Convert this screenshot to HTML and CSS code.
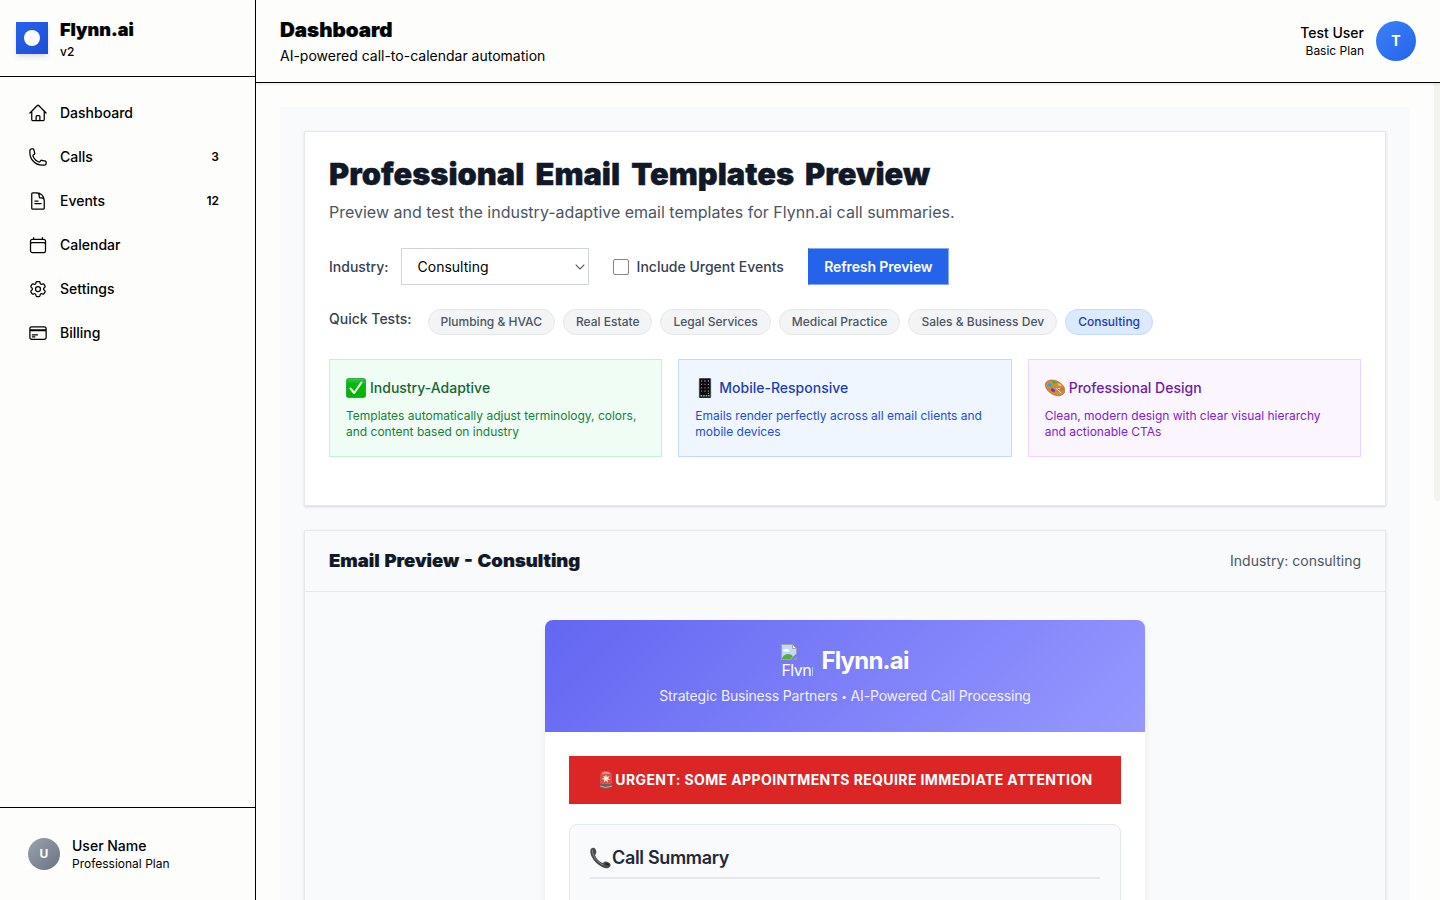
FILE: index.html
```html
<!DOCTYPE html>
<html lang="en">
<head>
<meta charset="utf-8">
<title>Flynn.ai Dashboard</title>
<link rel="stylesheet" href="styles.css">
</head>
<body>
<div class="app">
  <aside class="sidebar">
    <div class="brand">
      <div class="brand-mark"><span class="brand-dot"></span></div>
      <div>
        <div class="display brand-name">Flynn.ai</div>
        <div class="brand-version">v2</div>
      </div>
    </div>
    <nav class="nav">
      <a class="nav-item"><svg class="icon" viewBox="0 0 24 24"><path d="m2.25 12 8.954-8.955c.44-.439 1.152-.439 1.591 0L21.75 12M4.5 9.75v10.125c0 .621.504 1.125 1.125 1.125H9.75v-4.875c0-.621.504-1.125 1.125-1.125h2.25c.621 0 1.125.504 1.125 1.125V21h4.125c.621 0 1.125-.504 1.125-1.125V9.75M8.25 21h8.25"/></svg><span>Dashboard</span></a>
      <a class="nav-item"><svg class="icon" viewBox="0 0 24 24"><path d="M2.25 6.75c0 8.284 6.716 15 15 15h2.25a2.25 2.25 0 0 0 2.25-2.25v-1.372c0-.516-.351-.966-.852-1.091l-4.423-1.106c-.44-.11-.902.055-1.173.417l-.97 1.293c-.282.376-.769.542-1.21.38a12.035 12.035 0 0 1-7.143-7.143c-.162-.441.004-.928.38-1.21l1.293-.97c.363-.271.527-.734.417-1.173L6.963 3.102a1.125 1.125 0 0 0-1.091-.852H4.5A2.25 2.25 0 0 0 2.25 4.5v2.25Z"/></svg><span>Calls</span><span class="nav-count">3</span></a>
      <a class="nav-item"><svg class="icon" viewBox="0 0 24 24"><path d="M10.5 2.25H5.625c-.621 0-1.125.504-1.125 1.125v17.25c0 .621.504 1.125 1.125 1.125h12.75c.621 0 1.125-.504 1.125-1.125V11.25a9 9 0 0 0-9-9ZM10.125 2.25A3.375 3.375 0 0 1 13.5 5.625v1.5c0 .621.504 1.125 1.125 1.125h1.5a3.375 3.375 0 0 1 3.375 3.375M8.25 12H12m-3.75 3h7.5"/></svg><span>Events</span><span class="nav-count">12</span></a>
      <a class="nav-item"><svg class="icon" viewBox="0 0 24 24"><path d="M6.75 3v2.25M17.25 3v2.25M3 18.75V7.5a2.25 2.25 0 0 1 2.25-2.25h13.5A2.25 2.25 0 0 1 21 7.5v11.25m-18 0A2.25 2.25 0 0 0 5.25 21h13.5A2.25 2.25 0 0 0 21 18.75m-18 0V11.25A2.25 2.25 0 0 1 5.25 9h13.5A2.25 2.25 0 0 1 21 11.25v7.5"/></svg><span>Calendar</span></a>
      <a class="nav-item"><svg class="icon" viewBox="0 0 24 24"><path d="M9.594 3.94c.09-.542.56-.94 1.11-.94h2.593c.55 0 1.02.398 1.11.94l.213 1.281c.063.374.313.686.645.87.074.04.147.083.22.127.325.196.72.257 1.075.124l1.217-.456a1.125 1.125 0 0 1 1.37.49l1.296 2.247a1.125 1.125 0 0 1-.26 1.431l-1.003.827c-.293.241-.438.613-.43.992a7.723 7.723 0 0 1 0 .255c-.008.378.137.75.43.991l1.004.827c.424.35.534.955.26 1.43l-1.298 2.247a1.125 1.125 0 0 1-1.369.491l-1.217-.456c-.355-.133-.75-.072-1.076.124a6.47 6.47 0 0 1-.22.128c-.331.183-.581.495-.644.869l-.213 1.281c-.09.543-.56.94-1.11.94h-2.594c-.55 0-1.019-.398-1.11-.94l-.213-1.281c-.062-.374-.312-.686-.644-.87a6.52 6.52 0 0 1-.22-.127c-.325-.196-.72-.257-1.076-.124l-1.217.456a1.125 1.125 0 0 1-1.369-.49l-1.297-2.247a1.125 1.125 0 0 1 .26-1.431l1.004-.827c.292-.24.437-.613.43-.991a6.932 6.932 0 0 1 0-.255c.007-.38-.138-.751-.43-.992l-1.004-.827a1.125 1.125 0 0 1-.26-1.43l1.297-2.247a1.125 1.125 0 0 1 1.37-.491l1.216.456c.356.133.751.072 1.076-.124.072-.044.146-.086.22-.128.332-.183.582-.495.644-.869l.214-1.28Z"/><path d="M15 12a3 3 0 1 1-6 0 3 3 0 0 1 6 0Z"/></svg><span>Settings</span></a>
      <a class="nav-item"><svg class="icon" viewBox="0 0 24 24"><path d="M2.25 8.25h19.5M2.25 9h19.5m-16.5 5.25h6m-6 2.25h3m-3.75 3h15a2.25 2.25 0 0 0 2.25-2.25V6.75A2.25 2.25 0 0 0 19.5 4.5h-15a2.25 2.25 0 0 0-2.25 2.25v10.5A2.25 2.25 0 0 0 4.5 19.5Z"/></svg><span>Billing</span></a>
    </nav>
    <div class="account">
      <div class="avatar avatar-gray">U</div>
      <div>
        <div class="account-name">User Name</div>
        <div class="account-plan">Professional Plan</div>
      </div>
    </div>
  </aside>

  <div class="page">
    <header class="topbar">
      <div>
        <div class="display topbar-title">Dashboard</div>
        <div class="topbar-sub">AI-powered call-to-calendar automation</div>
      </div>
      <div class="user">
        <div class="user-text">
          <div class="account-name">Test User</div>
          <div class="account-plan">Basic Plan</div>
        </div>
        <div class="avatar avatar-blue">T</div>
      </div>
    </header>

    <div class="scroll">
      <main class="main">
        <div class="canvas">
          <section class="card controls-card">
            <h1 class="display title">Professional Email Templates Preview</h1>
            <p class="subtitle">Preview and test the industry-adaptive email templates for Flynn.ai call summaries.</p>
            <div class="controls">
              <div class="field">
                <label class="label" for="industry">Industry:</label>
                <div class="select-wrap">
                  <select id="industry" class="select"><option>Consulting</option></select>
                  <svg class="chevron" viewBox="0 0 10 6"><path d="M.7.7 5 5 9.3.7"/></svg>
                </div>
              </div>
              <label class="check"><span class="box"></span><span class="label">Include Urgent Events</span></label>
              <button class="button">Refresh Preview</button>
            </div>
            <div class="tests">
              <span class="label tests-label">Quick Tests:</span>
              <div class="chips">
                <span class="chip">Plumbing &amp; HVAC</span>
                <span class="chip">Real Estate</span>
                <span class="chip">Legal Services</span>
                <span class="chip">Medical Practice</span>
                <span class="chip">Sales &amp; Business Dev</span>
                <span class="chip chip-active">Consulting</span>
              </div>
            </div>
            <div class="features">
              <div class="feature green">
                <div class="feature-title">
                  <svg class="emoji" viewBox="0 0 20 20"><defs><linearGradient id="g1" x1="0" y1="0" x2="0" y2="1"><stop offset="0" stop-color="#35c94a"/><stop offset=".3" stop-color="#05b80d"/><stop offset="1" stop-color="#04b404"/></linearGradient></defs><rect x=".4" y=".4" width="19.2" height="19.2" rx="2.6" fill="url(#g1)" stroke="#129a2a" stroke-width=".8"/><path d="M4.5 10.6 8.2 15 15.4 4.6" fill="none" stroke="#fff" stroke-width="2" stroke-linecap="round" stroke-linejoin="round"/></svg>
                  <span>Industry-Adaptive</span>
                </div>
                <p class="feature-text">Templates automatically adjust terminology, colors, and content based on industry</p>
              </div>
              <div class="feature blue">
                <div class="feature-title">
                  <svg class="emoji" viewBox="0 0 20 20"><rect x="4.2" y=".3" width="11.6" height="19.6" rx="1" fill="#0b0b0b" stroke="#6f6a60" stroke-width=".5"/><path d="M6 3h1.2M9.4 6.4h1.2M6 13.2h1.2" stroke="#e04f4f" stroke-width="1.3"/><path d="M9.4 3h1.2M12.8 6.4H14M9.4 13.2h1.2" stroke="#5f9bd8" stroke-width="1.3"/><path d="M12.8 3H14M6 6.4h1.2M12.8 9.8H14" stroke="#a568c9" stroke-width="1.3"/><path d="M6 9.8h1.2M12.8 13.2H14" stroke="#53b65b" stroke-width="1.3"/><path d="M9.4 9.8h1.2" stroke="#d65a34" stroke-width="1.3"/><path d="M5.6 17.7h1.6m1 0h1.5m1 0h1.5m1 0h1.4" stroke="#8ccdb5" stroke-width="1.5"/><path d="M12.8 15.4H14" stroke="#e5e5e5" stroke-width=".8"/></svg>
                  <span>Mobile-Responsive</span>
                </div>
                <p class="feature-text">Emails render perfectly across all email clients and mobile devices</p>
              </div>
              <div class="feature purple">
                <div class="feature-title">
                  <svg class="emoji" viewBox="0 0 20 20"><path d="M.3 6.8C.3 3.6 3.3 2 7.2 2c5.6 0 12.5 5 12.7 10.4.1 3.3-3.6 5.7-7.3 5.4C6.3 17.3.3 11.6.3 6.8Zm12.5 3.8c1.2 1.3 3 .7 2.5-.6-.5-1.2-2.900-1-2.500.6Z" fill="#cb8d3d" fill-rule="evenodd" stroke="#94602a" stroke-width=".6"/><ellipse cx="4.9" cy="7" rx="2.2" ry="1.5" fill="#29a7e2" transform="rotate(35 4.9 7)"/><ellipse cx="9" cy="4.3" rx="2" ry="1.2" fill="#2fb940" transform="rotate(20 9 4.3)"/><ellipse cx="14.5" cy="6.8" rx="1.9" ry="1.1" fill="#f0cc27" transform="rotate(35 14.5 6.8)"/><ellipse cx="17.4" cy="11.2" rx="1.8" ry="1" fill="#e85842" transform="rotate(55 17.4 11.2)"/><ellipse cx="8" cy="12.2" rx="2.3" ry="1.5" fill="#7734b3" transform="rotate(30 8 12.2)"/><path d="M11.3 10.3 16 15.2" stroke="#f4e4cc" stroke-width="1"/></svg>
                  <span>Professional Design</span>
                </div>
                <p class="feature-text">Clean, modern design with clear visual hierarchy and actionable CTAs</p>
              </div>
            </div>
          </section>

          <section class="card preview-card">
            <div class="preview-head">
              <h2 class="display preview-title">Email Preview - Consulting</h2>
              <span class="preview-meta">Industry: consulting</span>
            </div>
            <div class="preview-body">
              <div class="email">
                <div class="email-head">
                  <div class="email-logo">
                    <div class="broken">
                      <svg class="broken-icon" viewBox="0 0 16 16"><path d="M.5.5H11.5L15.5 4.5V9.5L11 14 10 15.5H.5Z" fill="#c5d8f7" stroke="#a3a3a3"/><path d="M2.5 7.2c-.4-1.4 1-2.2 2-1.7.7-1.4 3-1 3 .5 1.2 0 1.2 1.4.2 1.4H3Z" fill="#fff"/><path d="M1 15c0-2.5 3-5 6-5 2.3 0 3.3.7 5 2.2L9.5 15Z" fill="#58ae35"/><path d="M11.5.5v4h4Z" fill="#fff" stroke="#a3a3a3"/><path d="M12.8 15.5 15.5 13v2.5Z" fill="#58ae35" stroke="#a3a3a3" stroke-width=".7"/></svg>
                      <span class="broken-alt">Flynn</span>
                    </div>
                    <span class="email-name">Flynn.ai</span>
                  </div>
                  <div class="email-tag">Strategic Business Partners <span class="bullet">•</span> AI-Powered Call Processing</div>
                </div>
                <div class="email-body">
                  <div class="alert">
                    <svg class="siren" viewBox="0 0 18 20"><path d="M3.5 13.5 4 4Q4.2 1.500 9 1.500T14 4l.5 9.500Z" fill="#df4a3b" stroke="#b97b72" stroke-width=".7"/><path d="M5.5 3.5Q9 1.800 12.500 3.500" fill="none" stroke="#f6aa9c" stroke-width="1.5"/><path d="m9 4.200.9 2.700 2.800-1-1.700 2.300 2.300 1.500-2.800.1.100 2.900L9 10.500l-2.300 1.800.7-2.700-2.700-.6 2.500-1.200L6 5.400l2.200 1.400Z" fill="#fff0e9"/><path d="M2.800 13.200Q9 15.400 15.200 13.200v4Q9 20.200 2.800 17.200Z" fill="#74605a"/><path d="M3.200 16.200Q9 18.800 14.800 16.200" fill="none" stroke="#c2aaa2" stroke-width="1"/></svg>
                    <span>URGENT: SOME APPOINTMENTS REQUIRE IMMEDIATE ATTENTION</span>
                  </div>
                  <div class="summary">
                    <div class="summary-title">
                      <svg class="receiver" viewBox="0 0 22 22"><path d="M1.200 1.600C2.600.200 4.700.400 5.500 2.200c.7 1.700 1.200 3.200.5 4.300-.5.700-1.100 1-.7 2.200.9 2.800 3.700 5.700 6.700 7 1.300.5 1.600-.1 2.300-.7 1.100-.9 2.600-.3 4.300.6 2.100 1.100 2.600 2.700 1.200 4.300-1.700 1.900-4.400 1.600-7.200.4C6.900 17.700 2 12.100.7 7.100.2 5 .1 2.800 1.200 1.600Z" fill="#4b4b4b"/><path d="M2.500 2.800C1.800 8 7 15.500 13.500 18" fill="none" stroke="#858585" stroke-width="1"/><path d="M15.500 17.200q2.200-.7 3.700.8" fill="none" stroke="#222" stroke-width="1.500"/></svg>
                      <span>Call Summary</span>
                    </div>
                  </div>
                </div>
              </div>
            </div>
          </section>
        </div>
      </main>
      <div class="scrollbar"><div class="thumb"></div></div>
    </div>
  </div>
</div>
</body>
</html>
```
FILE: styles.css
```css
* { box-sizing: border-box; }
body { margin: 0; font-family: Inter, "Liberation Sans", sans-serif; color: #000; background: #fdfdfb; font-size: 14px; line-height: 20px; overflow: hidden; }
h1, h2, p { margin: 0; }
.app { display: flex; height: 900px; }
.display { font-weight: 900; width: max-content; transform-origin: left center; -webkit-text-stroke: .2px currentColor; }

.sidebar { width: 256px; flex: none; border-right: 1px solid #000; display: flex; flex-direction: column; }
.brand { display: flex; align-items: center; gap: 12px; height: 77px; padding: 0 16px; border-bottom: 1px solid #000; }
.brand-mark { width: 32px; height: 32px; background: linear-gradient(135deg, #2563eb, #1d4ed8); box-shadow: 0 4px 6px -1px rgba(0,0,0,.1), 0 2px 4px -2px rgba(0,0,0,.1); display: flex; align-items: center; justify-content: center; }
.brand-dot { width: 16px; height: 16px; border-radius: 50%; background: #fff; }
.brand-name { font-size: 18px; line-height: 28px; }
.brand-version { font-size: 12px; line-height: 16px; font-weight: 500; }
.nav { flex: 1; padding: 16px; display: flex; flex-direction: column; gap: 4px; }
.nav-item { display: flex; align-items: center; gap: 12px; height: 40px; padding: 0 20px 0 12px; font-weight: 500; }
.icon { width: 20px; height: 20px; fill: none; stroke: #000; stroke-width: 1.5; stroke-linecap: round; stroke-linejoin: round; }
.nav-count { margin-left: auto; font-size: 12px; font-weight: 600; }
.account { height: 93px; border-top: 1px solid #000; padding: 0 28px; display: flex; align-items: center; gap: 12px; }
.account-name { font-weight: 500; line-height: 18px; }
.account-plan { font-size: 12px; line-height: 17px; }
.avatar { border-radius: 50%; color: #fff; font-weight: 700; display: flex; align-items: center; justify-content: center; }
.avatar-gray { width: 32px; height: 32px; font-size: 12px; background: linear-gradient(135deg, #9ca3af, #6b7280); }
.avatar-blue { width: 40px; height: 40px; font-size: 14px; background: linear-gradient(135deg, #3b82f6, #2563eb); }

.page { flex: 1; min-width: 0; display: flex; flex-direction: column; }
.topbar { height: 83px; flex: none; border-bottom: 1px solid #000; padding: 0 24px; display: flex; align-items: center; justify-content: space-between; box-shadow: 0 1px 3px rgba(0,0,0,.1); position: relative; }
.topbar-title { font-size: 20px; line-height: 28px; margin-bottom: 2px; transform: scaleX(1.027); }
.user { display: flex; align-items: center; gap: 12px; }
.user-text { text-align: right; }
.scroll { flex: 1; min-height: 0; display: flex; overflow: hidden; }
.main { flex: 1; min-width: 0; padding: 24px; }
.scrollbar { width: 6px; flex: none; }
.thumb { height: 418px; background: #f3f4ef; border-radius: 0 0 3px 3px; }
.canvas { background: #f8fafc; padding: 24px; display: flex; flex-direction: column; gap: 24px; min-height: 1200px; }

.card { border: 1px solid #e5e7eb; background: #fff; box-shadow: 0 1px 3px rgba(0,0,0,.1), 0 1px 2px -1px rgba(0,0,0,.1); }
.controls-card { padding: 24px 24px 48px; }
.title { font-size: 30px; line-height: 36px; color: #111827; -webkit-text-stroke-width: .4px; word-spacing: 4.8px; transform: scaleX(1.028); }
.subtitle { margin-top: 8px; font-size: 16px; line-height: 24px; color: #4b5563; }
.controls { margin-top: 24px; display: flex; align-items: center; gap: 24px; height: 37px; }
.field { display: flex; align-items: center; gap: 12px; }
.label { font-weight: 500; color: #374151; }
.select-wrap { position: relative; width: 188px; }
.select { appearance: none; display: block; width: 188px; height: 37px; border: 1px solid #d1d5db; border-radius: 0; padding: 0 16px; background: #fff; color: #000; font: 14px Inter, sans-serif; }
.chevron { position: absolute; right: 4px; top: 16px; width: 10px; height: 6px; fill: none; stroke: #555; stroke-width: 1.1; }
.check { display: flex; align-items: center; gap: 8px; }
.box { width: 16px; height: 16px; border: 1px solid #858585; border-radius: 2px; background: #fff; }
.button { width: 141px; height: 37px; padding: 0; border: 1px solid #86a9f3; border-left-color: #2563eb; border-radius: 0; background: #2563eb; color: #fff; font: 600 14px Inter, sans-serif; letter-spacing: -.11px; }
.tests { margin-top: 24px; display: flex; gap: 16px; }
.chips { display: flex; gap: 8px; }
.chip { border: 1px solid #e5e7eb; border-radius: 13px; background: #f3f4f6; color: #4b5563; font-size: 12px; line-height: 16px; font-weight: 500; padding: 4px 12px; }
.chip-active { background: #dbeafe; border-color: #bfdbfe; color: #1e40af; }
.features { margin-top: 24px; display: grid; grid-template-columns: repeat(3, 1fr); gap: 16px; }
.feature { height: 98px; border: 1px solid; padding: 16px; }
.feature-title { display: flex; align-items: center; gap: 4px; height: 24px; font-weight: 500; }
.emoji { width: 20px; height: 20px; }
.feature-text { margin-top: 8px; font-size: 12px; line-height: 16px; }
.green { background: #f0fdf4; border-color: #bbf7d0; color: #166534; }
.green .feature-text { color: #15803d; }
.blue { background: #eff6ff; border-color: #bfdbfe; color: #1e40af; }
.blue .feature-text { color: #1d4ed8; }
.purple { background: #faf5ff; border-color: #e9d5ff; color: #6b21a8; }
.purple .feature-text { color: #7e22ce; }

.preview-card { flex: 1; background: #f9fafb; }
.preview-head { height: 61px; padding: 0 24px; border-bottom: 1px solid #e5e7eb; display: flex; align-items: center; justify-content: space-between; }
.preview-title { font-size: 18px; line-height: 28px; color: #111827; word-spacing: 1px; transform: scaleX(1.027); }
.preview-meta { color: #4b5563; }
.preview-body { padding-top: 28px; display: flex; justify-content: center; }
.email { width: 600px; background: #fff; border-radius: 8px; overflow: hidden; box-shadow: 0 4px 6px rgba(0,0,0,.07); }
.email-head { height: 112px; padding-top: 24px; background: linear-gradient(135deg, #6366f1, #9698ff); color: #fff; text-align: center; }
.email-logo { display: flex; justify-content: center; gap: 8px; height: 32px; }
.broken { width: 32px; height: 32px; overflow: hidden; text-align: left; }
.broken-icon { display: block; width: 16px; height: 16px; }
.broken-alt { display: block; font-size: 16px; line-height: 20px; white-space: nowrap; letter-spacing: -.5px; }
.email-name { font-size: 24px; line-height: 33px; font-weight: 700; letter-spacing: -.8px; }
.email-tag { margin-top: 10px; color: rgba(255,255,255,.9); letter-spacing: -.16px; }
.bullet { font-size: 10px; vertical-align: 1px; }
.email-body { padding: 24px; }
.alert { height: 48px; background: #dc2626; color: #fff; font-weight: 700; letter-spacing: .39px; display: flex; align-items: center; justify-content: center; }
.siren { width: 18px; height: 20px; }
.summary { margin-top: 20px; height: 300px; border: 1px solid #e2e8f0; border-radius: 8px; background: #f8fafc; padding: 20px; }
.summary-title { height: 34px; border-bottom: 2px solid #e5e7eb; display: flex; align-items: flex-start; font-size: 18px; line-height: 26px; font-weight: 600; letter-spacing: -.33px; color: #1f2937; }
.receiver { width: 22px; height: 22px; margin-top: 2px; }
```
